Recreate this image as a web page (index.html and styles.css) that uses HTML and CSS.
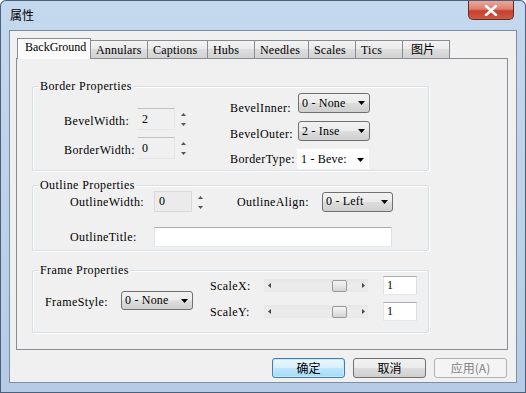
FILE: index.html
```html
<!DOCTYPE html>
<html lang="zh">
<head>
  <meta charset="UTF-8" />
  <title>属性</title>
  <link rel="stylesheet" href="styles.css">
</head>
<body>
  <div class="window">
    <!-- title bar -->
    <div class="titlebar">
      <span class="title">属性</span>
      <span class="close">
        <svg width="14" height="11" viewBox="0 0 14 11"><path d="M2 1 L12 10 M12 1 L2 10" stroke="#fff" stroke-width="2.6" stroke-linecap="round"/></svg>
      </span>
    </div>

    <div class="client">
      <!-- tabs -->
      <div class="tabs">
        <div class="tab tab-active w74">BackGround</div>
        <div class="tab w58">Annulars</div>
        <div class="tab w61">Captions</div>
        <div class="tab w48">Hubs</div>
        <div class="tab w55">Needles</div>
        <div class="tab w48">Scales</div>
        <div class="tab w48">Tics</div>
        <div class="tab tab-cjk w48">图片</div>
      </div>

      <div class="panel">
        <!-- Border Properties -->
        <div class="group g1">
          <div class="legend">Border Properties</div>
          <div class="g1-body">
            <div class="g1-left">
              <div class="row h22">
                <span class="lbl w73">BevelWidth:</span>
                <span class="spin-box">2</span>
                <svg class="spin" width="7" height="18" viewBox="0 0 7 18"><path d="M3.5 3 L6 6 L1 6 Z" fill="#555"/><path d="M1 13 L6 13 L3.5 16 Z" fill="#555"/></svg>
              </div>
              <div class="row h22">
                <span class="lbl w73">BorderWidth:</span>
                <span class="spin-box">0</span>
                <svg class="spin" width="7" height="18" viewBox="0 0 7 18"><path d="M3.5 3 L6 6 L1 6 Z" fill="#555"/><path d="M1 13 L6 13 L3.5 16 Z" fill="#555"/></svg>
              </div>
            </div>
            <div class="g1-right">
              <div class="row r1">
                <span class="lbl w68">BevelInner:</span>
                <span class="combo w72"><span>0 - None</span><svg width="7" height="4" viewBox="0 0 7 4"><path d="M0 0 L7 0 L3.5 4 Z" fill="#000"/></svg></span>
              </div>
              <div class="row r2">
                <span class="lbl w68">BevelOuter:</span>
                <span class="combo w72"><span>2 - Inse</span><svg width="7" height="4" viewBox="0 0 7 4"><path d="M0 0 L7 0 L3.5 4 Z" fill="#000"/></svg></span>
              </div>
              <div class="row r3">
                <span class="lbl w67">BorderType:</span>
                <span class="combo combo-flat w72"><span>1 - Beve:</span><svg width="7" height="4" viewBox="0 0 7 4"><path d="M0 0 L7 0 L3.5 4 Z" fill="#000"/></svg></span>
              </div>
            </div>
          </div>
        </div>

        <!-- Outline Properties -->
        <div class="group g2">
          <div class="legend">Outline Properties</div>
          <div class="g2-row first">
            <span class="lbl w84">OutlineWidth:</span>
            <span class="spin-box dark h21">0</span>
            <svg class="spin" width="7" height="18" viewBox="0 0 7 18"><path d="M3.5 3 L6 6 L1 6 Z" fill="#555"/><path d="M1 13 L6 13 L3.5 16 Z" fill="#555"/></svg>
            <span class="lbl w85 align-lbl">OutlineAlign:</span>
            <span class="combo w71"><span>0 - Left</span><svg width="7" height="4" viewBox="0 0 7 4"><path d="M0 0 L7 0 L3.5 4 Z" fill="#000"/></svg></span>
          </div>
          <div class="g2-row second">
            <span class="lbl w84">OutlineTitle:</span>
            <span class="textbox w238"></span>
          </div>
        </div>

        <!-- Frame Properties -->
        <div class="group g3">
          <div class="legend">Frame Properties</div>
          <div class="g3-body">
            <div class="g3-left">
              <span class="lbl w76">FrameStyle:</span>
              <span class="combo w72 h19"><span>0 - None</span><svg width="7" height="4" viewBox="0 0 7 4"><path d="M0 0 L7 0 L3.5 4 Z" fill="#000"/></svg></span>
            </div>
            <div class="g3-right">
              <div class="row h19">
                <span class="lbl w54">ScaleX:</span>
                <span class="scroll">
                  <svg width="3" height="5" viewBox="0 0 3 5"><path d="M3 0 L3 5 L0 2.5 Z" fill="#444"/></svg>
                  <span class="scroll-fill"></span>
                  <span class="thumb"></span>
                  <svg class="arrow-r" width="3" height="5" viewBox="0 0 3 5"><path d="M0 0 L0 5 L3 2.5 Z" fill="#444"/></svg>
                </span>
                <span class="textbox w34 num">1</span>
              </div>
              <div class="row h19">
                <span class="lbl w54">ScaleY:</span>
                <span class="scroll">
                  <svg width="3" height="5" viewBox="0 0 3 5"><path d="M3 0 L3 5 L0 2.5 Z" fill="#444"/></svg>
                  <span class="scroll-fill"></span>
                  <span class="thumb"></span>
                  <svg class="arrow-r" width="3" height="5" viewBox="0 0 3 5"><path d="M0 0 L0 5 L3 2.5 Z" fill="#444"/></svg>
                </span>
                <span class="textbox w34 num">1</span>
              </div>
            </div>
          </div>
        </div>
      </div>

      <!-- dialog buttons -->
      <div class="buttons">
        <span class="btn btn-default">确定</span>
        <span class="btn">取消</span>
        <span class="btn btn-disabled">应用(A)</span>
      </div>
    </div>
  </div>
</body>
</html>
```

FILE: styles.css
```css
body {
  margin: 0;
  padding: 0;
  background: #fff;
  font-family: "Liberation Serif", "Noto Sans CJK SC", serif;
  font-size: 12px;
  letter-spacing: 0.4px;
  color: #000;
}
.window {
  width: 526px;
  height: 393px;
  box-sizing: border-box;
  padding: 0 9px 10px 9px;
  background: linear-gradient(180deg, #c4d8ee 0, #bed3eb 40%, #b6cce6 100%);
  border-radius: 6px 6px 0 0;
  box-shadow: inset 0 0 0 1px #4b607a;
}
.titlebar {
  height: 30px;
  display: flex;
  align-items: flex-start;
}
.title {
  margin: 7px 0 0 1px;
  font-family: "Noto Sans CJK SC", sans-serif;
  font-size: 12px;
  letter-spacing: 0;
  line-height: 16px;
}
.close {
  margin: 1px 3px 0 auto;
  width: 46px;
  height: 19px;
  box-sizing: border-box;
  border: 1px solid #6a2a22;
  border-top: none;
  border-radius: 0 0 5px 5px;
  background: linear-gradient(180deg, #e9a99b 0, #dd7f70 45%, #c6402f 55%, #cf5a3e 100%);
  display: flex;
  align-items: center;
  justify-content: center;
}

/* client area */
.client {
  width: 508px;
  height: 353px;
  box-sizing: border-box;
  background: #f0f0f0;
  border: 1px solid #7d8ea3;
  padding: 7px 9px 0 6px;
}
.tabs {
  display: flex;
  align-items: flex-end;
  height: 20px;
}
.tab {
  position: relative;
  height: 18px;
  box-sizing: border-box;
  border: 1px solid #898c95;
  border-bottom: none;
  margin-left: -1px;
  padding: 2px 0 0 5px;
  line-height: 14px;
  background: linear-gradient(180deg, #f3f3f3 0, #ebebeb 45%, #dddddd 50%, #d2d2d2 100%);
  white-space: nowrap;
  overflow: hidden;
  letter-spacing: 0.2px;
}
.tab-active {
  height: 21px;
  margin: 0 0 -1px 1px;
  padding: 1px 0 0 7px;
  background: #fbfbfb;
  z-index: 1;
  letter-spacing: 0;
}
.tab-cjk {
  font-family: "Noto Sans CJK SC", sans-serif;
  font-size: 12px;
  letter-spacing: 0;
  padding-top: 1px;
  padding-left: 8px;
}
.w74 { width: 74px; }
.w58 { width: 58px; }
.w61 { width: 61px; }
.w48 { width: 48px; }
.w55 { width: 55px; }

.panel {
  width: 492px;
  height: 292px;
  box-sizing: border-box;
  border: 1px solid #898c95;
  background: #f0f0f0;
  padding: 27px 0 0 15px;
}

/* group boxes */
.group {
  width: 397px;
  box-sizing: border-box;
  border: 1px solid #d5dfe5;
  box-shadow: 1px 1px 0 #fff, inset 1px 1px 0 #fff;
  border-radius: 2px;
}
.legend {
  display: table;
  height: 12px;
  line-height: 12px;
  margin: -7px 0 0 6px;
  padding: 0 1px;
  background: #f0f0f0;
}
.g1 { height: 85px; }
.g2 { height: 66px; margin-top: 14px; }
.g3 { height: 63px; margin-top: 19px; }

.row {
  display: flex;
  align-items: center;
}
.lbl {
  flex: none;
  white-space: nowrap;
  line-height: 12px;
}
.h22 { height: 22px; }
.h21 { height: 21px; }
.h19 { height: 19px; }

.g1-body {
  display: flex;
  align-items: flex-start;
  padding-left: 31px;
}
.g1-left {
  display: flex;
  flex-direction: column;
  gap: 7px;
  margin-top: 16px;
}
.g1-left .lbl { padding-top: 3px; }
.g1-right {
  display: flex;
  flex-direction: column;
  gap: 8px;
  margin: 1px 0 0 43px;
}
.g1-right .row { height: 20px; }
.g1-right .r1 .lbl { padding-top: 10px; }
.g1-right .r2 .lbl { padding-top: 5px; }
.g1-right .r3 { height: 19px; }
.g1-right .r3 .lbl { padding-top: 0; }
.w73 { width: 73px; }
.w68 { width: 68px; }
.w67 { width: 67px; }
.w84 { width: 84px; }
.w85 { width: 85px; }
.w76 { width: 76px; }
.w54 { width: 54px; }

.spin-box {
  width: 38px;
  height: 22px;
  box-sizing: border-box;
  border: 1px solid #e6e6e6;
  border-top-color: #c2c2c2;
  border-left-color: #f0f0f0;
  background: #f0f0f0;
  padding: 3px 0 0 4px;
  line-height: 14px;
}
.spin-box.dark {
  height: 21px;
  background: #ebebeb;
  border-color: #d9d9d9;
  padding-top: 2px;
}
.spin {
  flex: none;
  margin-left: 5px;
}

.combo {
  height: 20px;
  box-sizing: border-box;
  display: flex;
  align-items: center;
  justify-content: space-between;
  border: 1px solid #707070;
  border-radius: 3px;
  padding: 0 4px 0 3px;
  background: linear-gradient(180deg, #f2f2f2 0, #ebebeb 48%, #dddddd 52%, #cfcfcf 100%);
  white-space: nowrap;
  overflow: hidden;
  letter-spacing: 0.2px;
}
.combo-flat {
  border-color: #fff;
  border-radius: 0;
  background: #fff;
  padding-top: 2px;
}
.w72 { width: 72px; }
.w71 { width: 71px; }
.combo.h19 { height: 19px; }

.g2-row {
  display: flex;
  align-items: center;
  padding-left: 37px;
}
.g2-row.first { height: 21px; margin-top: 0; }
.g2-row.second { height: 20px; margin-top: 15px; }
.align-lbl { margin-left: 33px; }

.textbox {
  height: 20px;
  box-sizing: border-box;
  background: #fff;
  border: 1px solid #e3e9ef;
  border-top-color: #abadb3;
  border-left-color: #e2e3ea;
  border-right-color: #dbdfe6;
}
.w238 { width: 238px; }
.w34 { width: 34px; }
.textbox.num {
  height: 19px;
  margin-left: 15px;
  padding: 1px 0 0 3px;
  line-height: 15px;
}

.g3-body {
  display: flex;
  align-items: flex-start;
  padding-left: 12px;
}
.g3-left {
  display: flex;
  align-items: center;
  margin-top: 15px;
}
.g3-left .lbl { padding-top: 2px; }
.g3-right {
  display: flex;
  flex-direction: column;
  gap: 7px;
  margin-left: 17px;
}
.scroll {
  width: 104px;
  height: 13px;
  box-sizing: border-box;
  display: flex;
  align-items: center;
  padding: 0 3px 0 4px;
  background: linear-gradient(180deg, #e6e6e6 0, #ececec 50%, #e8e8e8 100%);
}
.scroll-fill { flex: 1; }
.thumb {
  width: 15px;
  height: 12px;
  box-sizing: border-box;
  border: 1px solid #9a9a9a;
  border-radius: 2px;
  background: linear-gradient(180deg, #f4f4f4 0, #e6e6e6 50%, #d4d4d4 100%);
}
.arrow-r { margin-left: 15px; }

/* dialog buttons */
.buttons {
  display: flex;
  justify-content: flex-end;
  gap: 8px;
  margin-top: 8px;
}
.btn {
  width: 73px;
  height: 20px;
  box-sizing: border-box;
  border: 1px solid #707070;
  border-radius: 3px;
  background: linear-gradient(180deg, #f2f2f2 0, #ebebeb 48%, #dddddd 52%, #cfcfcf 100%);
  font-family: "Noto Sans CJK SC", sans-serif;
  font-size: 12px;
  letter-spacing: 0;
  line-height: 18px;
  text-align: center;
}
.btn-default {
  border-color: #3c7fb1;
  background: linear-gradient(180deg, #eaf6fd 0, #d9f0fc 48%, #bee6fd 52%, #a7d9f5 100%);
  box-shadow: inset 0 0 0 1px #c8e8f8;
}
.btn-disabled {
  border-color: #adb2b5;
  background: #f4f4f4;
  color: #838383;
}
```
